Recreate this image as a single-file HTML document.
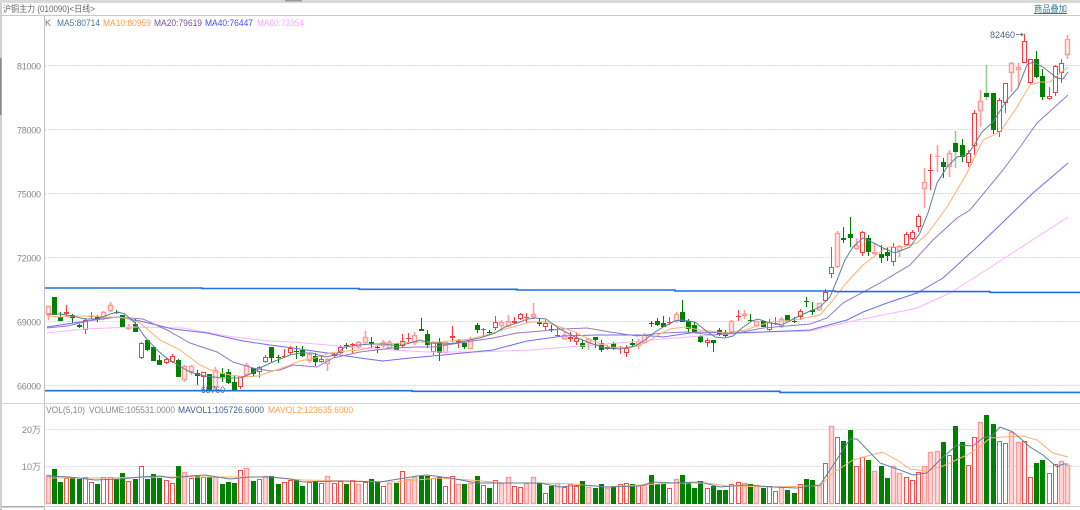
<!DOCTYPE html>
<html>
<head>
<meta charset="utf-8">
<style>
html,body{margin:0;padding:0;background:#fff;width:1080px;height:510px;overflow:hidden}
svg{display:block;filter:blur(.35px)}
text{font-family:"Liberation Sans","Noto Sans CJK SC",sans-serif;font-size:9px}
</style>
</head>
<body>
<svg id="c" xmlns="http://www.w3.org/2000/svg" width="1080" height="510" viewBox="0 0 1080 510">
<rect width="1080" height="510" fill="#fff"/>
<rect width="1080" height="3" fill="#dcdad6"/>
<rect x="285" y="0" width="17" height="1.5" fill="#999"/>
<rect x="0" y="15" width="1080" height="1" fill="#c8c8c8"/>
<rect x="0" y="3" width="2" height="507" fill="#d0d0d0"/>
<rect x="0" y="58" width="1.5" height="57" fill="#888"/>
<rect x="44" y="16" width="1" height="494" fill="#c4c4c4"/>
<rect x="0" y="403" width="1080" height="1" fill="#d4d4d4"/>
<rect x="0" y="506" width="1080" height="1" fill="#d0d0d0"/>
<rect x="2" y="506" width="42" height="1.5" fill="#aaa"/>
<g stroke="#dcdcdc" stroke-width="1" stroke-dasharray="2 1">
<line x1="45" x2="1080" y1="65.5" y2="65.5"/>
<line x1="45" x2="1080" y1="129.5" y2="129.5"/>
<line x1="45" x2="1080" y1="193.5" y2="193.5"/>
<line x1="45" x2="1080" y1="257.5" y2="257.5"/>
<line x1="45" x2="1080" y1="321.5" y2="321.5"/>
<line x1="45" x2="1080" y1="385.5" y2="385.5"/>
<line x1="45" x2="1080" y1="429.5" y2="429.5"/>
<line x1="45" x2="1080" y1="466.5" y2="466.5"/>
</g>
<text x="3" y="12" fill="#666" textLength="92" lengthAdjust="spacingAndGlyphs">沪铜主力 (010090)&lt;日线&gt;</text>
<text x="1034" y="12" fill="#2f7d9d" textLength="33" lengthAdjust="spacingAndGlyphs">商品叠加</text>
<rect x="1034" y="13" width="33" height="1" fill="#2f7d9d"/>
<text x="45" y="26" fill="#777">K</text>
<text x="57" y="26" fill="#4f7396" textLength="43" lengthAdjust="spacingAndGlyphs">MA5:80714</text>
<text x="103" y="26" fill="#ff9d4d" textLength="48" lengthAdjust="spacingAndGlyphs">MA10:80959</text>
<text x="154" y="26" fill="#7a4f9f" textLength="48" lengthAdjust="spacingAndGlyphs">MA20:79619</text>
<text x="205" y="26" fill="#4a4aff" textLength="48" lengthAdjust="spacingAndGlyphs">MA40:76447</text>
<text x="257" y="26" fill="#ffa8ff" textLength="47" lengthAdjust="spacingAndGlyphs">MA60:73954</text>
<g fill="#888">
<text x="17" y="69.5" textLength="24">81000</text>
<text x="17" y="133.5" textLength="24">78000</text>
<text x="17" y="197.5" textLength="24">75000</text>
<text x="17" y="261.5" textLength="24">72000</text>
<text x="17" y="325.5" textLength="24">69000</text>
<text x="17" y="389.5" textLength="24">66000</text>
<text x="22" y="433" textLength="19" lengthAdjust="spacingAndGlyphs">20万</text>
<text x="22" y="470" textLength="19" lengthAdjust="spacingAndGlyphs">10万</text>
</g>
<text x="46" y="413" fill="#888" textLength="39" lengthAdjust="spacingAndGlyphs">VOL(5,10)</text>
<text x="89" y="413" fill="#888" textLength="86" lengthAdjust="spacingAndGlyphs">VOLUME:105531.0000</text>
<text x="178" y="413" fill="#3f5f8f" textLength="86" lengthAdjust="spacingAndGlyphs">MAVOL1:105726.6000</text>
<text x="268" y="413" fill="#ffa050" textLength="85" lengthAdjust="spacingAndGlyphs">MAVOL2:123635.6000</text>
<text x="990" y="38" fill="#4a6484" textLength="25" lengthAdjust="spacingAndGlyphs">82460</text>
<path d="M1016 34.5h7M1021 33l2 1.5-2 1.5" stroke="#667" stroke-width=".8" fill="none"/>
<g id="v"></g>
<g id="k"></g>
<g id="m" fill="none" stroke-width="1"></g>
<text x="201" y="393" fill="#4a6484" textLength="24" lengthAdjust="spacingAndGlyphs">65760</text>
<path d="M45 288H202V288.5H359V289.3H517V290H675V291H835V291.6H990V292.4H1080" fill="none" stroke="#1f6fe6" stroke-width="1.6"/>
<path d="M45 390.7H412V391.3H780V392.4H1080" fill="none" stroke="#1f6fe6" stroke-width="1.6"/>
</svg>
<script>
var K="p,306,315,306,320 g,297,315,297,315 g,317,321,312,321 r,312,314,305,316 g,315,318,314,323 g,325,327,324,328 r,320,330,318,334 r,316,316,312,319 g,317,320,315,322 p,312,318,311,320 p,305,311,302,312 g,312,313,310,314 g,315,327,315,327 p,327,329,324,330 g,324,332,319,332 r,343,358,342,359 g,340,350,340,351 g,347,361,347,361 g,360,365,355,365 r,359,363,357,364 r,356,362,354,363 g,360,377,359,377 p,366,380,365,382 p,366,372,365,375 g,373,376,370,385 r,372,377,372,390 g,374,390,374,390 p,370,387,367,390 g,373,377,368,382 g,372,383,369,384 g,382,390,376,390 r,376,387,376,389 p,365,375,363,377 g,368,374,368,377 r,367,372,366,378 r,357,362,355,363 g,347,358,347,362 g,357,358,355,363 r,356,357,349,358 r,348,353,346,355 g,351,352,346,359 g,350,356,346,357 p,354,361,353,363 g,356,362,353,366 r,359,362,356,363 p,359,364,358,371 r,354,356,353,358 r,347,353,345,354 g,345,346,343,349 r,344,345,343,353 p,342,347,341,349 p,337,343,331,345 g,342,344,337,348 g,347,348,345,353 p,342,346,340,348 p,342,348,340,349 g,343,350,343,350 r,341,346,334,347 r,338,339,333,342 p,335,343,332,345 g,329,331,318,331 g,334,345,330,348 r,342,352,342,355 g,342,353,338,361 p,342,353,342,353 r,336,338,326,342 r,340,342,339,348 g,343,347,342,349 p,339,349,337,349 g,325,330,323,333 r,329,330,328,336 g,332,333,330,335 r,322,328,316,330 p,322,326,320,331 p,321,326,315,327 r,321,323,317,324 r,314,319,313,320 r,317,318,313,323 p,314,317,303,319 g,322,324,319,326 r,323,327,320,331 g,329,330,325,332 r,335,336,328,337 p,335,339,332,340 r,337,339,332,342 r,338,342,333,345 g,343,347,340,349 p,339,343,338,350 g,337,340,337,348 g,343,350,340,352 r,347,349,345,350 g,343,349,342,350 r,347,348,346,354 r,348,353,345,357 g,343,345,339,347 p,341,346,339,349 p,335,343,333,343 g,323,324,321,327 g,321,325,318,326 g,323,327,316,327 r,322,323,317,325 p,314,321,312,323 g,312,322,300,322 g,321,329,319,333 g,325,332,322,333 g,336,342,335,343 r,340,343,338,347 g,340,343,340,352 g,330,335,328,336 g,332,336,330,337 p,321,332,320,332 r,316,317,310,321 p,314,316,310,319 g,320,321,314,322 p,321,326,321,327 g,321,327,321,327 r,322,330,319,331 r,323,324,317,325 p,319,327,317,328 g,315,321,315,321 g,321,322,317,323 r,311,317,309,320 g,301,302,297,307 g,310,312,302,315 p,303,310,303,311 r,292,301,289,302 r,267,274,247,278 p,233,267,231,268 g,238,240,227,243 g,234,238,217,247 p,245,249,238,250 r,232,253,231,256 g,238,252,235,256 p,252,254,243,255 g,254,258,245,263 g,252,256,247,261 r,247,262,243,266 p,246,251,245,257 r,234,245,232,246 r,232,239,230,240 r,216,227,214,232 p,182,189,168,208 r,170,171,154,190 p,156,157,145,172 g,162,167,158,178 p,153,167,150,177 q,143,152,131,168 g,145,157,139,162 r,153,163,150,167 r,113,146,110,155 p,101,111,90,127 q,93,97,65,100 g,93,130,93,134 r,100,132,98,137 r,83,103,83,113 p,63,73,62,92 p,67,70,63,87 r,41,63,34,63 r,59,83,59,84 g,59,77,51,78 g,76,97,69,100 r,96,99,87,100 r,66,93,65,96 r,63,73,59,83 p,39,55,35,59".split(" ");
var V="p475 g469 g482 r478 g477 g479 r477 r482 g484 r477 r477 g479 g473 r481 g479 r466 g479 g474 g478 r480 r483 g466 p472 r478 g476 r477 g477 p477 g484 g482 g483 r470 p468 g481 r479 p476 g476 g484 r482 r480 g479 g486 r482 g481 r483 p476 r483 r481 g484 r480 p484 r482 g479 g482 r486 p483 g483 r471 p479 p477 g476 g476 r478 g477 r486 r476 p484 g484 p483 g476 r485 g488 r480 p483 p477 r486 r487 p483 p477 g483 r493 g486 p483 r487 r484 r486 g481 p487 g488 g484 p488 g487 r484 r483 g484 r485 p485 g475 g484 g484 r488 p479 g475 g483 g488 g481 r488 g486 g490 g490 r484 r482 p483 g484 p485 g488 r486 r491 p487 g490 g493 r484 g479 g480 p485 r463 p426 r437 g441 g430 r466 r457 g460 p471 g466 g478 p466 p473 r477 r480 r472 p466 p452 p451 g442 r455 g426 g442 r465 r437 p422 g415 g424 r441 r443 p432 p442 r441 r477 g463 g460 r473 r464 p461 p465".split(" ");
var M=[
["#5f7f9c",1,"47,314 60,314 72,316 85,319 97,319 110,314 118,312 125,314 135,323 145,337 155,348 165,357 178,365 190,372 205,376 222,378 240,378 250,374 262,367 275,361 290,355 300,353 312,353 325,357 335,355 345,347 358,345 372,344 385,344 398,346 410,343 420,340 430,343 445,344 455,343 465,341 480,338 495,333 505,327 520,322 528,319 535,318 546,319 560,329 575,337 590,343 605,348 620,349 635,346 645,340 655,332 665,326 675,321 682,320 695,322 705,330 715,337 725,338 733,336 742,328 752,321 758,319 770,323 782,325 795,318 808,312 820,307 830,297 837,280 845,260 853,247 863,238 870,241 883,248 895,253 910,247 920,233 928,213 937,183 947,167 957,157 967,155 973,147 982,132 993,122 1007,100 1018,88 1027,65 1033,62 1043,67 1057,78 1063,79 1068,72"],
["#ffb070",1,"47,316 60,317 75,316 90,316 110,317 125,318 140,323 160,340 180,350 200,365 215,372 230,375 245,377 258,376 270,372 285,367 300,361 315,358 330,353 345,351 360,350 380,345 400,343 420,342 440,342 470,339 490,334 505,329 520,325 530,322 545,322 560,327 575,332 590,340 610,347 630,348 645,343 660,334 670,329 685,327 700,330 710,331 725,333 745,330 770,322 785,321 800,319 820,315 833,300 847,282 863,265 880,252 888,247 903,247 917,243 928,233 947,207 967,173 983,140 1000,132 1017,107 1030,85 1040,82 1050,82 1060,73 1068,67"],
["#9678c4",1,"47,328 67,326 93,320 117,317 143,319 167,330 190,343 217,352 233,362 253,368 270,371 280,370 293,365 317,367 333,358 360,352 393,348 417,347 433,347 460,343 493,338 517,333 530,332 563,329 587,328 610,332 637,336 663,333 687,332 713,335 737,333 763,328 810,324 827,318 843,303 880,283 910,265 933,240 957,218 970,210 1003,170 1020,147 1037,123 1068,95"],
["#6e6efc",1,"47,327 80,322 117,317 140,321 173,329 207,333 243,341 270,345 293,348 327,353 360,358 383,361 410,358 443,355 493,350 527,341 563,336 597,335 640,335 663,337 697,332 730,333 763,332 810,330 847,320 863,312 887,303 917,293 943,278 977,247 1000,225 1033,193 1068,163"],
["#ffb4ff",1,"47,333 83,329 133,327 183,328 233,337 270,341 293,342 327,345 360,348 393,350 427,352 477,352 530,350 580,346 630,342 663,339 713,335 763,332 810,331 857,320 883,315 917,308 950,293 983,272 1017,250 1068,217"],
["#5f7f9c",1,"47,476 70,477 95,480 120,479 140,477 160,476 172,478 190,476 205,475 230,479 250,477 270,477 290,479 303,482 340,481 380,482 417,476 427,475 450,478 477,483 503,483 540,483 560,487 583,485 607,487 640,486 653,482 673,483 700,482 720,487 747,485 773,487 797,488 810,486 820,485 830,470 850,439 857,439 880,463 900,470 913,475 927,473 943,457 957,445 973,446 983,438 993,435 1000,427 1013,432 1030,447 1043,455 1057,467 1063,464 1068,464"],
["#ffb070",1,"47,478 100,478 167,477 270,477 303,480 353,481 397,482 437,478 470,480 503,483 540,483 573,484 607,487 640,485 673,483 707,483 727,486 773,487 810,486 820,486 833,473 853,460 882,452 897,460 910,469 927,471 943,466 967,455 980,447 990,438 1003,437 1023,436 1037,440 1053,453 1068,457"]
];
var h="",vh="",mh="",i;
for(i=0;i<K.length;i++){
var d=K[i].split(","),t=d[0],a=+d[1],b=+d[2],c=+d[3],e=+d[4];
var x=Math.round(47.5+6.218*i)+.5;
var red=t=="r"||t=="p",pale=t=="p"||t=="q";
var col=t=="r"?"#ff3c3c":t=="p"?"#ff9a9a":"#008000";
h+='<line x1="'+x+'" x2="'+x+'" y1="'+c+'" y2="'+e+'" stroke="'+(t=="q"?"#9c9":col)+'" stroke-width="'+(pale?1.6:1)+'"/>';
if(red){
 if(b-a<=1){h+='<line x1="'+(x-2.5)+'" x2="'+(x+2.5)+'" y1="'+(a+.5)+'" y2="'+(a+.5)+'" stroke="'+col+'"/>';}
 else{h+='<rect x="'+(x-2)+'" y="'+(a+.5)+'" width="4" height="'+(b-a-1)+'" fill="'+(pale?"#ffecec":"#fff")+'" stroke="'+col+'" stroke-width="'+(pale?1.4:1)+'"/>';}
}else{
 h+='<rect x="'+(x-2.5)+'" y="'+a+'" width="5" height="'+Math.max(b-a,1)+'" fill="#008000"/>';
}
}
document.getElementById("k").innerHTML=h;
for(i=0;i<V.length;i++){
var t=V[i].charAt(0),y=+V[i].slice(1),x=Math.round(47.5+6.218*i)+.5;
if(t=="g"){vh+='<rect x="'+(x-2.5)+'" y="'+y+'" width="5" height="'+(504-y)+'" fill="#008000"/>';}
else if(t=="r"){vh+='<rect x="'+(x-2)+'" y="'+(y+.5)+'" width="4" height="'+(503-y)+'" fill="#fff" stroke="#ff4a4a"/>';}
else{vh+='<rect x="'+(x-2)+'" y="'+(y+.5)+'" width="4" height="'+(503-y)+'" fill="#ffdcdc" stroke="#ff9a9a" stroke-width="1.4"/>';}
}
document.getElementById("v").innerHTML=vh;
for(i=M.length-1;i>=0;i--){mh+='<polyline points="'+M[i][2]+'" stroke="'+M[i][0]+'" stroke-width="'+M[i][1]+'"/>';}
document.getElementById("m").innerHTML=mh;
</script>
</body>
</html>
